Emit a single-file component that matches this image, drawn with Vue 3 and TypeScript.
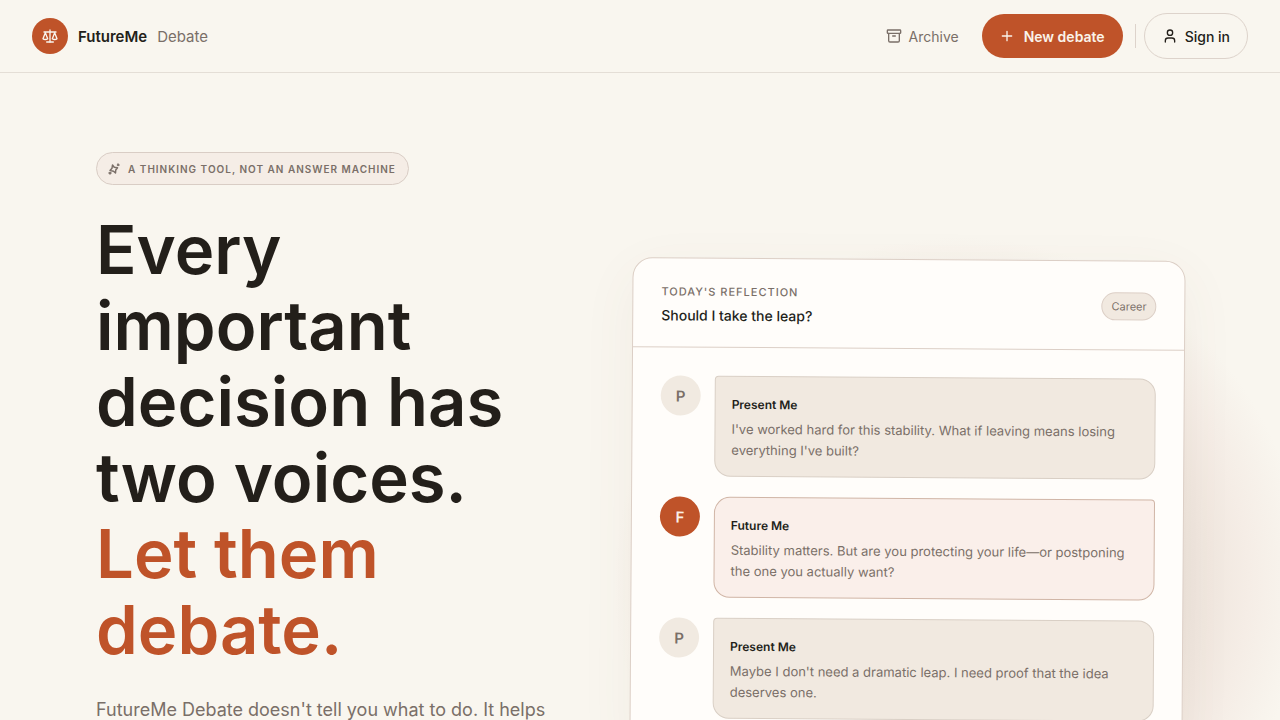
<script setup lang="ts">
interface Message {
  id: number
  initial: string
  name: string
  text: string
  voice: 'present' | 'future'
}

const messages: Message[] = [
  {
    id: 1,
    initial: 'P',
    name: 'Present Me',
    text: "I've worked hard for this stability. What if leaving means losing everything I've built?",
    voice: 'present',
  },
  {
    id: 2,
    initial: 'F',
    name: 'Future Me',
    text: 'Stability matters. But are you protecting your life—or postponing the one you actually want?',
    voice: 'future',
  },
  {
    id: 3,
    initial: 'P',
    name: 'Present Me',
    text: "Maybe I don't need a dramatic leap. I need proof that the idea deserves one.",
    voice: 'present',
  },
]
</script>

<template>
  <div class="page">
    <header class="topbar">
      <a class="brand" href="#">
        <span class="logo">
          <svg viewBox="0 0 24 24" aria-hidden="true">
            <path d="m15.500 16 3.500-9 3.500 9c-.9.900-2.100 1.200-3.500 1.200s-2.600-.3-3.500-1.200Z" />
            <path d="m1.500 16 3.500-9 3.500 9c-.9.900-2.100 1.200-3.500 1.200s-2.600-.3-3.500-1.200Z" />
            <path d="M7 21h10" />
            <path d="M12 3v18" />
            <path d="M3 6h18" />
          </svg>
        </span>
        <span class="brand-name">FutureMe</span>
        <span class="brand-sub">Debate</span>
      </a>
      <nav class="nav">
        <a class="archive" href="#archive">
          <svg viewBox="0 0 24 24" aria-hidden="true">
            <rect x="2" y="3" width="20" height="5" rx="1" />
            <path d="M4 8v11a2 2 0 0 0 2 2h12a2 2 0 0 0 2-2V8" />
            <path d="M10 12h4" />
          </svg>
          Archive
        </a>
        <button class="btn primary" type="button">
          <svg viewBox="0 0 24 24" aria-hidden="true"><path d="M5 12h14M12 5v14" /></svg>
          New debate
        </button>
        <span class="divider"></span>
        <button class="btn outline" type="button">
          <svg viewBox="0 0 24 24" aria-hidden="true">
            <path d="M19 21v-2a4 4 0 0 0-4-4H9a4 4 0 0 0-4 4v2" />
            <circle cx="12" cy="7" r="4" />
          </svg>
          Sign in
        </button>
      </nav>
    </header>

    <main class="hero">
      <section class="intro">
        <p class="badge">
          <svg viewBox="0 0 24 24" aria-hidden="true">
            <path d="M9 4 12.500 8.500 19 9.500 15.500 14 15 20 11 16.500 4 15 8 10.500Z" />
            <path d="M20 2v3M19 4h3M4 19v3M2 20h4" />
          </svg>
          A thinking tool, not an answer machine
        </p>
        <h1>Every important decision has two voices. <em>Let them debate.</em></h1>
        <p class="lead">FutureMe Debate doesn't tell you what to do. It helps</p>
      </section>

      <section class="stage">
        <article class="card">
          <header class="card-head">
            <div>
              <p class="eyebrow">Today's reflection</p>
              <h2>Should I take the leap?</h2>
            </div>
            <span class="tag">Career</span>
          </header>
          <ul class="thread">
            <li v-for="m in messages" :key="m.id" :class="m.voice">
              <span class="avatar">{{ m.initial }}</span>
              <div class="bubble">
                <h3>{{ m.name }}</h3>
                <p>{{ m.text }}</p>
              </div>
            </li>
          </ul>
        </article>
      </section>
    </main>
  </div>
</template>

<style>
body {
  background: #f9f6ef;
}
</style>

<style scoped>
.page {
  --ink: #231f1a;
  --muted: #7a6f68;
  --line: #ddd3cb;
  --accent: #bf5329;
  height: 100vh;
  overflow: hidden;
  background: #f9f6ef;
  color: var(--ink);
  font-family: Inter, "Liberation Sans", sans-serif;
}
.page * {
  box-sizing: border-box;
}
h1, h2, h3, p, ul {
  margin: 0;
  padding: 0;
}
svg {
  width: 16px;
  height: 16px;
  flex: none;
  fill: none;
  stroke: currentColor;
  stroke-width: 2;
  stroke-linecap: round;
  stroke-linejoin: round;
}
a {
  color: inherit;
  text-decoration: none;
}
.topbar {
  display: flex;
  align-items: center;
  justify-content: space-between;
  padding: 13px 32px;
  border-bottom: 1px solid #e4ded6;
}
.brand {
  display: flex;
  align-items: center;
  gap: 10px;
  font-size: 15px;
}
.logo {
  display: grid;
  place-items: center;
  width: 36px;
  height: 36px;
  border-radius: 50%;
  background: var(--accent);
  color: #f9f6ef;
}
.brand-name {
  font-weight: 600;
}
.brand-sub {
  color: var(--muted);
}
.nav {
  display: flex;
  align-items: center;
  font-size: 14px;
}
.archive {
  display: flex;
  align-items: center;
  gap: 7px;
  margin-right: 23px;
  color: var(--muted);
}
.btn {
  display: flex;
  align-items: center;
  height: 44px;
  border: 0;
  border-radius: 23px;
  font: inherit;
  font-weight: 500;
}
.primary {
  gap: 9px;
  padding: 0 18px 0 17px;
  background: var(--accent);
  color: #faf3ea;
  font-weight: 600;
}
.divider {
  width: 1px;
  height: 24px;
  margin: 0 8px 0 12px;
  background: var(--line);
}
.outline {
  gap: 7px;
  height: 46px;
  padding: 0 17px;
  border: 1px solid var(--line);
  background: transparent;
  color: var(--ink);
}
.hero {
  display: grid;
  grid-template-columns: minmax(0, 4fr) minmax(0, 5fr);
  gap: 92px;
  align-items: start;
  padding: 79px 96px;
}
.badge {
  display: inline-flex;
  align-items: center;
  gap: 8px;
  height: 33px;
  padding: 0 12px 0 11px;
  border: 1px solid #d9cdc5;
  border-radius: 17px;
  background: #f5ede6;
  color: var(--muted);
  font-size: 10px;
  font-weight: 600;
  letter-spacing: 1px;
  text-transform: uppercase;
  white-space: nowrap;
}
.badge svg {
  width: 12px;
  height: 12px;
  stroke-width: 3;
}
h1 {
  margin-top: 27px;
  font-size: 67px;
  line-height: 76px;
  font-weight: 600;
}
h1 em {
  display: block;
  font-style: normal;
  color: var(--accent);
}
.lead {
  margin-top: 27px;
  font-size: 18px;
  line-height: 30px;
  color: var(--muted);
  white-space: nowrap;
}
.stage {
  position: relative;
  margin-top: 107px;
}
.stage::before {
  content: "";
  position: absolute;
  top: -22px;
  left: -17px;
  width: 690px;
  height: 690px;
  border-radius: 50%;
  background: radial-gradient(circle closest-side, #ece3db 63%, #f1e8e0 74%, #f5ede6 84%, #f7f2eb 93%, #f9f6ef 100%);
}
.card {
  position: relative;
  border: 1px solid #dccfc6;
  border-radius: 20px;
  background: #fffdfa;
  transform: rotate(0.38deg);
  box-shadow: 0 16px 56px rgba(120, 80, 60, 0.06);
}
.card-head {
  display: flex;
  align-items: center;
  justify-content: space-between;
  padding: 22px 28px 20px;
  border-bottom: 1px solid #dccfc6;
}
.eyebrow {
  font-size: 11px;
  line-height: 22px;
  font-weight: 500;
  letter-spacing: 1px;
  text-transform: uppercase;
  color: var(--muted);
}
h2 {
  margin-top: 2px;
  font-size: 14px;
  line-height: 22px;
  font-weight: 500;
}
.tag {
  padding: 5px 9px;
  border: 1px solid #dccfc6;
  border-radius: 14px;
  background: #f1e9e0;
  color: var(--muted);
  font-size: 11px;
  line-height: 16px;
}
.thread {
  display: grid;
  gap: 20px;
  padding: 28px;
  list-style: none;
}
.thread li {
  display: flex;
  align-items: flex-start;
  gap: 14px;
}
.avatar {
  display: grid;
  place-items: center;
  flex: none;
  width: 40px;
  height: 40px;
  border-radius: 50%;
  background: #f1eae1;
  color: var(--muted);
  font-size: 15px;
  font-weight: 600;
}
.bubble {
  flex: 1;
  padding: 17px 16px 15px;
  border: 1px solid #d9cfc5;
  border-radius: 4px 16px 16px 16px;
  background: #f1e9e0;
}
.future .avatar {
  background: var(--accent);
  color: #faf0e8;
}
.future .bubble {
  border-color: #d0b5a6;
  border-radius: 16px 4px 16px 16px;
  background: #faefea;
}
h3 {
  margin-bottom: 4px;
  font-size: 12px;
  line-height: 21px;
  font-weight: 600;
}
.bubble p {
  font-size: 13px;
  line-height: 21px;
  color: var(--muted);
}
</style>
